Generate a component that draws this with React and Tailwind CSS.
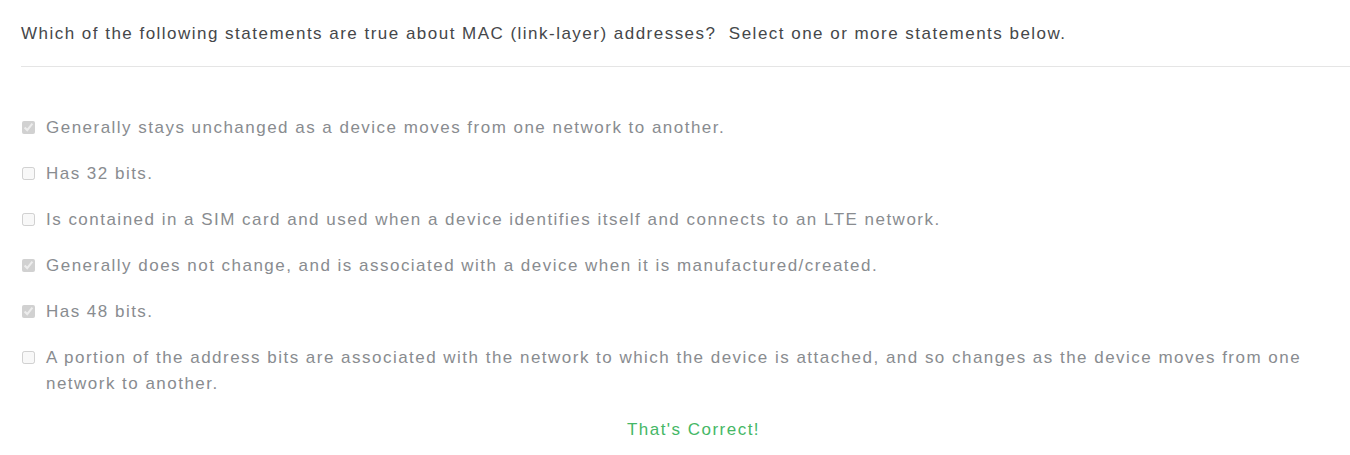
import React from "react";

const options = [
  { text: "Generally stays unchanged as a device moves from one network to another.", checked: true },
  { text: "Has 32 bits.", checked: false },
  { text: "Is contained in a SIM card and used when a device identifies itself and connects to an LTE network.", checked: false },
  { text: "Generally does not change, and is associated with a device when it is manufactured/created.", checked: true },
  { text: "Has 48 bits.", checked: true },
  { text: "A portion of the address bits are associated with the network to which the device is attached, and so changes as the device moves from one network to another.", checked: false },
];

export default function App() {
  return (
    <div className="w-[1350px] h-[455px] bg-white pl-[21px] font-['Liberation_Sans',Arial,sans-serif] tracking-[1.48px]">
      <div className="pt-[21px] pb-[19px] text-[17px] leading-[26px] text-[#45474a]">
        Which of the following statements are true about MAC (link-layer) addresses?&nbsp; Select one or more statements below.
      </div>
      <div className="border-t border-[#e5e5e5]" />
      <div className="pt-[48px] flex flex-col gap-[20px] pr-[40px]">
        {options.map((o, i) => (
          <label key={i} className="flex items-start text-[17px] leading-[26px] text-[#898c90]">
            <input type="checkbox" disabled defaultChecked={o.checked} className="mt-[6px] ml-[1px] mr-[11px] w-[13px] h-[13px] shrink-0" />
            <span>{o.text}</span>
          </label>
        ))}
      </div>
      <div className="mt-[20px] pl-[16px] text-center text-[17px] leading-[26px] text-[#45b766]">That's Correct!</div>
    </div>
  );
}
